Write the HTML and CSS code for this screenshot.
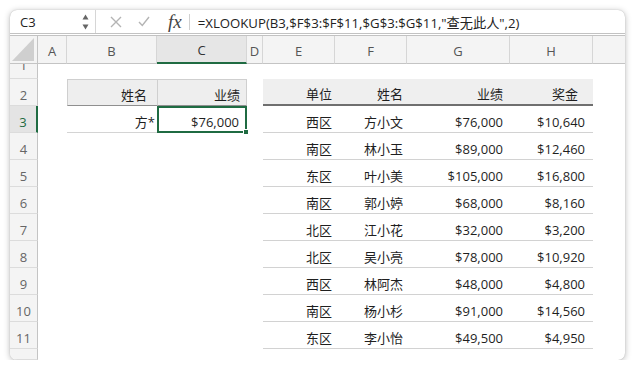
FILE: index.html
```html
<!DOCTYPE html>
<html lang="zh-CN">
<head>
<meta charset="utf-8">
<title>XLOOKUP</title>
<link rel="stylesheet" href="styles.css">
</head>
<body>
<div class="window">
  <div class="fbar">
    <div class="namebox">
      <span class="ref">C3</span>
      <svg class="spin" width="7" height="16" viewBox="0 0 7 16"><path d="M3.5 0.5 L6.5 5.5 L0.5 5.5 Z" fill="#666"/><path d="M0.5 10.5 L6.5 10.5 L3.5 15.5 Z" fill="#666"/></svg>
    </div>
    <div class="fbtns">
      <svg class="ico-x" width="12" height="12" viewBox="0 0 12 12"><path d="M1 1 L11 11 M11 1 L1 11" stroke="#b4b4b4" stroke-width="1.4" fill="none"/></svg>
      <svg class="ico-ok" width="12" height="11" viewBox="0 0 12 11"><path d="M1 6 L4.3 9.5 L11 1" stroke="#b4b4b4" stroke-width="1.4" fill="none"/></svg>
      <span class="fx">fx</span>
    </div>
    <div class="formula">=XLOOKUP(B3,$F$3:$F$11,$G$3:$G$11,"查无此人",2)</div>
  </div>

  <div class="sheet">
    <div class="row colhdr">
      <div class="corner"><svg width="24" height="25" viewBox="0 0 24 25"><path d="M23 1 L23 24 L1 24 Z" fill="#cfcfcf"/></svg></div>
      <div class="ch">A</div>
      <div class="ch">B</div>
      <div class="ch sel">C</div>
      <div class="ch">D</div>
      <div class="ch">E</div>
      <div class="ch">F</div>
      <div class="ch">G</div>
      <div class="ch">H</div>
      <div class="ch last"></div>
    </div>

    <div class="row r1">
      <div class="rh">1</div>
      <div></div><div></div><div></div><div></div><div></div><div></div><div></div><div></div><div></div>
    </div>

    <div class="row">
      <div class="rh">2</div>
      <div></div>
      <div class="c t1h pb">姓名</div>
      <div class="c t1h pc t1h-r">业绩</div>
      <div></div>
      <div class="c t2h pe">单位</div>
      <div class="c t2h pf">姓名</div>
      <div class="c t2h pg">业绩</div>
      <div class="c t2h ph-h">奖金</div>
      <div></div>
    </div>

    <div class="row">
      <div class="rh sel">3</div>
      <div></div>
      <div class="c t1d pb3">方*</div>
      <div class="c t1d pc active">$76,000<span class="handle"></span></div>
      <div></div>
      <div class="c t2d pe">西区</div>
      <div class="c t2d pf">方小文</div>
      <div class="c t2d pg">$76,000</div>
      <div class="c t2d ph">$10,640</div>
      <div></div>
    </div>

    <div class="row">
      <div class="rh">4</div>
      <div></div><div></div><div></div><div></div>
      <div class="c t2d pe">南区</div>
      <div class="c t2d pf">林小玉</div>
      <div class="c t2d pg">$89,000</div>
      <div class="c t2d ph">$12,460</div>
      <div></div>
    </div>

    <div class="row">
      <div class="rh">5</div>
      <div></div><div></div><div></div><div></div>
      <div class="c t2d pe">东区</div>
      <div class="c t2d pf">叶小美</div>
      <div class="c t2d pg">$105,000</div>
      <div class="c t2d ph">$16,800</div>
      <div></div>
    </div>

    <div class="row">
      <div class="rh">6</div>
      <div></div><div></div><div></div><div></div>
      <div class="c t2d pe">南区</div>
      <div class="c t2d pf">郭小婷</div>
      <div class="c t2d pg">$68,000</div>
      <div class="c t2d ph">$8,160</div>
      <div></div>
    </div>

    <div class="row">
      <div class="rh">7</div>
      <div></div><div></div><div></div><div></div>
      <div class="c t2d pe">北区</div>
      <div class="c t2d pf">江小花</div>
      <div class="c t2d pg">$32,000</div>
      <div class="c t2d ph">$3,200</div>
      <div></div>
    </div>

    <div class="row">
      <div class="rh">8</div>
      <div></div><div></div><div></div><div></div>
      <div class="c t2d pe">北区</div>
      <div class="c t2d pf">吴小亮</div>
      <div class="c t2d pg">$78,000</div>
      <div class="c t2d ph">$10,920</div>
      <div></div>
    </div>

    <div class="row">
      <div class="rh">9</div>
      <div></div><div></div><div></div><div></div>
      <div class="c t2d pe">西区</div>
      <div class="c t2d pf">林阿杰</div>
      <div class="c t2d pg">$48,000</div>
      <div class="c t2d ph">$4,800</div>
      <div></div>
    </div>

    <div class="row">
      <div class="rh">10</div>
      <div></div><div></div><div></div><div></div>
      <div class="c t2d pe">南区</div>
      <div class="c t2d pf">杨小杉</div>
      <div class="c t2d pg">$91,000</div>
      <div class="c t2d ph">$14,560</div>
      <div></div>
    </div>

    <div class="row">
      <div class="rh">11</div>
      <div></div><div></div><div></div><div></div>
      <div class="c t2d pe">东区</div>
      <div class="c t2d pf">李小怡</div>
      <div class="c t2d pg">$49,500</div>
      <div class="c t2d ph">$4,950</div>
      <div></div>
    </div>

    <div class="row r12">
      <div class="rh"></div>
      <div></div><div></div><div></div><div></div><div></div><div></div><div></div><div></div><div></div>
    </div>
  </div>
</div>
</body>
</html>
```

FILE: styles.css
```css
* { box-sizing: border-box; }

html, body {
  margin: 0;
  padding: 0;
  background: #ffffff;
}

body {
  padding: 10px 0 0 10px;
  font-family: "Open Sans", "Noto Sans CJK SC", sans-serif;
  font-size: 13px;
  color: #1f1f1f;
}

.window {
  width: 615px;
  height: 350px;
  border-radius: 7px;
  overflow: hidden;
  background: #ffffff;
  box-shadow: 0 1px 6px rgba(0, 0, 0, 0.28), 0 0 1px rgba(0, 0, 0, 0.25);
}

/* formula bar */
.fbar {
  display: flex;
  align-items: center;
  height: 26px;
  border-bottom: 3px double #c2c2c2;
}

.namebox {
  width: 86px;
  height: 100%;
  display: flex;
  align-items: center;
  justify-content: space-between;
  padding: 0 6px 0 10px;
  border-right: 1px solid #d6d6d6;
}

.ref {
  font-size: 13px;
  color: #222;
  padding-top: 1px;
}

.spin { display: block; }

.fbtns {
  display: flex;
  align-items: center;
  height: 100%;
  padding-left: 14px;
}

.ico-x { display: block; }
.ico-ok { display: block; margin-left: 16px; }

.fx {
  margin-left: 18px;
  padding-right: 7px;
  font-family: "Liberation Serif", "DejaVu Serif", serif;
  font-style: italic;
  font-size: 19px;
  color: #444;
  line-height: 16px;
  border-right: 1px solid #d0d0d0;
  height: 16px;
  display: flex;
  align-items: center;
}

.formula {
  padding-left: 8px;
  font-size: 13.2px;
  color: #222;
  white-space: nowrap;
  padding-top: 1px;
}

/* sheet grid */
.row {
  display: grid;
  grid-template-columns: 28px 29px 90px 90px 16px 72px 72px 103px 83px 1fr;
  height: 27px;
}

.colhdr { height: 28px; }
.r1 { height: 15px; }
.r12 { height: 11px; }

.corner {
  background: #f4f4f4;
  border-right: 1px solid #c4c4c4;
  border-bottom: 1px solid #c4c4c4;
  display: flex;
  align-items: flex-end;
  justify-content: flex-end;
  padding: 0 2px 1px 0;
}

.corner svg { display: block; }

.ch {
  background: #f4f4f4;
  border-right: 1px solid #d6d6d6;
  border-bottom: 1px solid #c4c4c4;
  display: flex;
  align-items: center;
  justify-content: center;
  color: #555;
  font-size: 13px;
  padding-top: 2px;
}

.ch.sel {
  background: #e6e6e6;
  border-bottom: 2px solid #1f6b42;
  color: #333;
}

.ch.last { border-right: none; }

.rh {
  background: #f4f4f4;
  border-right: 1px solid #c4c4c4;
  border-bottom: 1px solid #dcdcdc;
  display: flex;
  align-items: flex-end;
  justify-content: center;
  padding-bottom: 1px;
  color: #666;
  font-size: 13px;
  line-height: 18px;
  overflow: hidden;
}

.r1 .rh { padding-bottom: 4px; }

.rh.sel {
  background: #e4e4e4;
  border-right: 2px solid #1f6b42;
  color: #1f6b42;
}

/* cells */
.c {
  display: flex;
  align-items: flex-end;
  justify-content: flex-end;
  padding-bottom: 1px;
  line-height: 18px;
  white-space: nowrap;
  font-size: 13px;
  color: #1f1f1f;
}

.t1h {
  background: #eeeeee;
  border-top: 1px solid #cfcfcf;
  border-left: 1px solid #cfcfcf;
  border-bottom: 1px solid #8f8f8f;
}

.t1h-r { border-right: 1px solid #cfcfcf; }

.t1d { border-bottom: 1px solid #d4d4d4; }

.t2h {
  background: #efefef;
  border-bottom: 2px solid #6f6f6f;
  padding-bottom: 1px;
}

.t2d { border-bottom: 1px solid #d2d2d2; }

.active {
  position: relative;
  border: 2px solid #1f6b42;
  padding-bottom: 0;
}

.handle {
  position: absolute;
  right: -4px;
  bottom: -4px;
  width: 6px;
  height: 6px;
  background: #1f6b42;
  border: 1px solid #ffffff;
}

/* right paddings per column */
.pb { padding-right: 10px; }
.pb3 { padding-right: 2px; }
.pc { padding-right: 6px; }
.pe { padding-right: 3px; }
.pf { padding-right: 4px; }
.pg { padding-right: 7px; }
.ph { padding-right: 8px; }
.ph-h { padding-right: 15px; }
```
